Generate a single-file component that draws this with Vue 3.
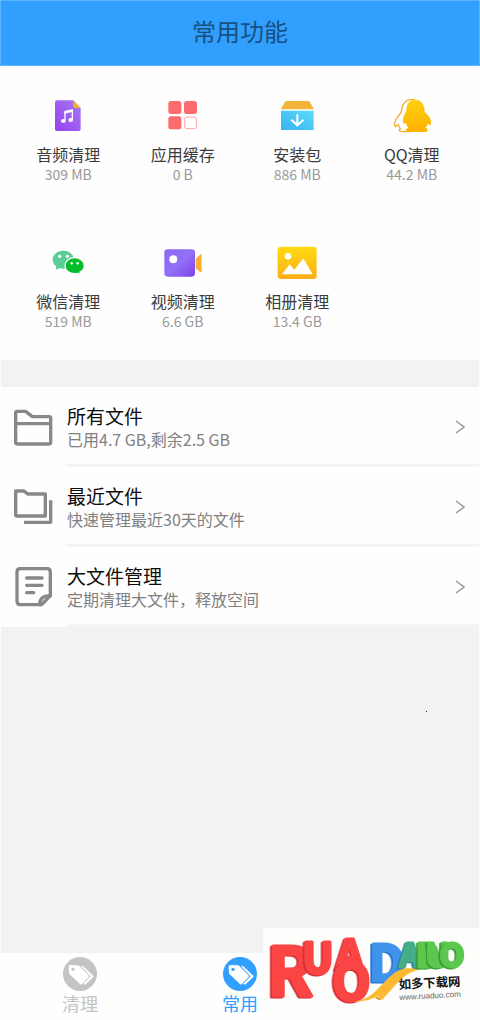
<template>
  <div class="page">
    <header class="top">
      <h1>常用功能</h1>
    </header>

    <main>
      <section class="tools">
        <button v-for="tool in tools" :key="tool.name" class="tool">
          <svg v-if="tool.icon === 'music'" viewBox="0 0 120 102">
            <defs>
              <linearGradient id="music" x1="1" y1="0" x2="0" y2="1">
                <stop offset="0" stop-color="#a77bf7" />
                <stop offset="1" stop-color="#9540ee" />
              </linearGradient>
            </defs>
            <path d="M27 4H76L98 27V90Q98 96 92 96H27Q21 96 21 90V10Q21 4 27 4Z" fill="url(#music)" />
            <path d="M76 4L98 27H80Q76 27 76 22Z" fill="#f5ae35" />
            <path d="M51 66V38M73 33V63" fill="none" stroke="#fff" stroke-width="4" />
            <path d="M49 36L75 30V38L49 44Z" fill="#fff" />
            <ellipse cx="46" cy="66" rx="7" ry="6" fill="#fff" />
            <ellipse cx="68" cy="63" rx="7" ry="6" fill="#fff" />
          </svg>
          <svg v-else-if="tool.icon === 'apps'" viewBox="0 0 120 102">
            <rect x="16" y="6" width="39" height="39" rx="8" fill="#fc6c6d" />
            <rect x="63" y="6" width="39" height="39" rx="8" fill="#fc6c6d" />
            <rect x="16" y="52" width="39" height="39" rx="8" fill="#fc6c6d" />
            <rect x="65" y="54" width="35" height="35" rx="7" fill="#fff" stroke="#f9a5a8" stroke-width="3" />
          </svg>
          <svg v-else-if="tool.icon === 'package'" viewBox="0 0 120 102">
            <defs>
              <linearGradient id="package" x1="1" y1="0" x2="0" y2="1">
                <stop offset="0" stop-color="#5edcf8" />
                <stop offset="1" stop-color="#37b1f3" />
              </linearGradient>
            </defs>
            <path d="M26 6H97L111 31H11Z" fill="#f3b43b" />
            <path d="M12 35H110V93H12Z" fill="url(#package)" />
            <path d="M61 46V78M43 62L61 79L79 62" fill="none" stroke="#fff" stroke-width="6" />
          </svg>
          <svg v-else-if="tool.icon === 'penguin'" viewBox="0 0 120 102">
            <defs>
              <linearGradient id="penguin" x1="0" y1="0" x2="0" y2="1">
                <stop offset="0" stop-color="#ffd010" />
                <stop offset="1" stop-color="#ffb300" />
              </linearGradient>
            </defs>
            <path
              d="M68 2C46-2 30 12 29 34C28 42 25 44 19 51C9 62 6 77 9 82C12 84 16 79 19 77C20 82 22 86 26 89C20 91 20 98 30 98H58"
              fill="#fff" stroke="#f6ab32" stroke-width="4" stroke-linejoin="round"
            />
            <path
              d="M69 2C51 2 42 17 43 36C36 47 31 61 34 73C37 75 40 73 42 72C43 79 46 83 50 87C40 88 38 98 49 99H100C111 97 109 89 100 87C104 83 107 79 108 73C112 79 117 82 117 73C118 60 110 49 98 39C98 16 88 2 69 2Z"
              fill="url(#penguin)"
            />
          </svg>
          <svg v-else-if="tool.icon === 'chat'" viewBox="0 0 120 102">
            <path d="M46 14C28 14 14 26 14 41C14 50 19 57 25 61L23 71L35 66Q40 68 46 68C64 68 78 56 78 41C78 26 64 14 46 14Z" fill="#59cd96" />
            <circle cx="35" cy="31" r="5" fill="#fff" />
            <circle cx="58" cy="31" r="5" fill="#fff" />
            <path d="M80 35C64 35 51 45 51 59C51 73 64 83 80 83Q85 83 89 82L98 87L96 78C104 74 109 67 109 59C109 45 96 35 80 35Z" fill="#04bd2c" stroke="#fff" stroke-width="4" />
            <circle cx="71" cy="52" r="4" fill="#d8f7de" />
            <circle cx="89" cy="52" r="4" fill="#d8f7de" />
          </svg>
          <svg v-else-if="tool.icon === 'video'" viewBox="0 0 120 102">
            <defs>
              <linearGradient id="video" x1="0" y1="0" x2="1" y2="1">
                <stop offset="0" stop-color="#8e66f2" />
                <stop offset="0.5" stop-color="#9270f7" />
                <stop offset="1" stop-color="#7b43e7" />
              </linearGradient>
            </defs>
            <rect x="4" y="10" width="92" height="82" rx="10" fill="url(#video)" />
            <path d="M98 39L112 25H116V79H112L98 67Z" fill="#f9b233" />
            <circle cx="31" cy="40" r="12" fill="#fff" />
          </svg>
          <svg v-else viewBox="0 0 120 102">
            <defs>
              <linearGradient id="album" x1="0" y1="0" x2="0" y2="1">
                <stop offset="0" stop-color="#ffdc12" />
                <stop offset="1" stop-color="#fcae16" />
              </linearGradient>
            </defs>
            <rect x="2" y="2" width="117" height="97" rx="9" fill="url(#album)" />
            <circle cx="33" cy="31" r="10" fill="#fff" />
            <path d="M15 85L38 55L52 71L79 37L107 85Z" fill="#fff" />
          </svg>
          <span class="name">{{ tool.name }}</span>
          <span class="size">{{ tool.size }}</span>
        </button>
      </section>

      <section class="files">
        <button v-for="file in files" :key="file.title" class="file">
          <svg class="file-icon" viewBox="0 0 120 120">
            <g v-if="file.icon === 'folder'">
              <path d="M8 106V17Q8 13 12 13H38L58 29H109Q113 29 113 33V106Q113 111 108 111H13Q8 111 8 106Z" />
              <path d="M8 50H113" />
            </g>
            <g v-else-if="file.icon === 'recent'">
              <path d="M8 83V12H33L44 21H97V87H12Q8 87 8 83Z" />
              <path d="M113 40V106H33" />
            </g>
            <g v-else>
              <path d="M22 5H102Q112 5 112 15V86L86 113H22Q12 113 12 103V15Q12 5 22 5Z" />
              <path d="M80 113Q79 86 112 86M41 33H87M41 55H87M41 77H62" stroke-linecap="round" />
            </g>
          </svg>
          <span class="file-body">
            <span class="file-text">
              <span class="file-title">{{ file.title }}</span>
              <span class="file-note">{{ file.note }}</span>
            </span>
            <svg class="arrow" viewBox="0 0 10 14">
              <path d="M1 1L9 7L1 13" />
            </svg>
          </span>
        </button>
      </section>

      <div class="rest"><i class="speck"></i></div>
    </main>

    <nav class="tabs">
      <button
        v-for="tab in tabs"
        :key="tab"
        class="tab"
        :class="{ active: tab === activeTab }"
        @click="activeTab = tab"
      >
        <svg viewBox="0 0 102 102">
          <circle cx="51" cy="51" r="51" fill="currentColor" />
          <path d="M53 26L61 28L91 56Q93 58 91 60L68 82Q65 84 61 80L83 58Z" fill="#fff" />
          <path d="M17 30Q17 24 23 24L43 25Q47 25 49 27L77 55Q79 58 77 60L57 81Q54 84 51 81L20 52Q18 50 18 47Z" fill="#fff" />
          <circle cx="30" cy="37" r="5" fill="currentColor" />
        </svg>
        <span>{{ tab }}</span>
      </button>
    </nav>

    <aside class="brand">
      <svg viewBox="0 0 651 276">
        <text
          v-for="(l, i) in letters"
          :key="i"
          class="letter"
          :class="l.tone"
          :x="l.x"
          :y="l.y"
          :font-size="l.size"
        >{{ l.char }}</text>
        <path d="M272 220C345 218 368 128 430 121Q452 119 468 127C430 130 408 160 358 215L342 205Q315 223 272 220Z" fill="#fdb932" />
        <path d="M340 206L356 214L348 216L336 209Z" fill="#d88b13" />
        <g transform="rotate(-3 408 186)">
          <text class="brand-name" x="408" y="183">如多下载网</text>
          <text class="brand-url" x="408" y="216">www.ruaduo.com</text>
        </g>
      </svg>
    </aside>
  </div>
</template>

<script setup>
import { ref } from "vue";

const tools = [
  { name: "音频清理", size: "309 MB", icon: "music" },
  { name: "应用缓存", size: "0 B", icon: "apps" },
  { name: "安装包", size: "886 MB", icon: "package" },
  { name: "QQ清理", size: "44.2 MB", icon: "penguin" },
  { name: "微信清理", size: "519 MB", icon: "chat" },
  { name: "视频清理", size: "6.6 GB", icon: "video" },
  { name: "相册清理", size: "13.4 GB", icon: "album" },
];

const files = [
  { title: "所有文件", note: "已用4.7 GB,剩余2.5 GB", icon: "folder" },
  { title: "最近文件", note: "快速管理最近30天的文件", icon: "recent" },
  { title: "大文件管理", note: "定期清理大文件，释放空间", icon: "large" },
];

const tabs = ["清理", "常用"];
const activeTab = ref("常用");

const letters = [
  { char: "R", x: 12, y: 204, size: 204, tone: "red" },
  { char: "U", x: 118, y: 134, size: 126, tone: "red" },
  { char: "A", x: 220, y: 126, size: 126, tone: "red" },
  { char: "D", x: 318, y: 158, size: 150, tone: "blue" },
  { char: "O", x: 208, y: 216, size: 150, tone: "red" },
  { char: "A", x: 410, y: 118, size: 96, tone: "teal" },
  { char: "D", x: 460, y: 118, size: 96, tone: "green" },
  { char: "U", x: 488, y: 118, size: 96, tone: "green" },
  { char: "O", x: 530, y: 118, size: 96, tone: "green" },
];
</script>

<style>
body {
  margin: 0;
  background: #fff;
}
</style>

<style scoped>
.page {
  position: relative;
  display: flex;
  flex-direction: column;
  min-height: 100vh;
  font-family: "Noto Sans CJK SC", sans-serif;
  background: #fefefe;
}
button {
  padding: 0;
  border: 0;
  background: none;
  font: inherit;
  color: inherit;
  cursor: pointer;
}
.top {
  box-sizing: border-box;
  height: 66px;
  border: 1px solid #5ab5ff;
  background: #309ffd;
}
h1 {
  margin: 0;
  font-size: 24px;
  font-weight: 400;
  line-height: 60px;
  text-align: center;
  color: #18507f;
}
main {
  display: flex;
  flex: 1;
  flex-direction: column;
  margin: 0 1px;
  background: #f1f3f3;
}
.tools {
  display: grid;
  grid-template-columns: repeat(4, 1fr);
  row-gap: 64px;
  padding: 33px 10px 31px;
  background: #fefefe;
}
.tool {
  display: flex;
  flex-direction: column;
  align-items: center;
}
.tool svg {
  width: 40px;
  height: 34px;
  margin-bottom: 9px;
}
.name {
  font-size: 16px;
  line-height: 24px;
  color: #3c3c3c;
}
.size {
  font-size: 14px;
  line-height: 16px;
  color: #999;
}
.files {
  margin-top: 27px;
  background: #fefefe;
}
.file {
  display: flex;
  align-items: center;
  gap: 14px;
  width: 100%;
  padding-left: 12px;
  text-align: left;
}
.file-icon {
  flex: none;
  width: 40px;
  height: 40px;
  fill: none;
  stroke: #888;
  stroke-width: 10;
  stroke-linejoin: round;
}
.file-body {
  display: flex;
  flex: 1;
  align-items: center;
  justify-content: space-between;
  padding: 17px 14px 14px 0;
  border-bottom: 3px solid #f3f4f4;
}
.file-text {
  display: flex;
  flex-direction: column;
}
.file-title {
  font-size: 19px;
  line-height: 24px;
  color: #0c0c0c;
}
.file-note {
  font-size: 16px;
  line-height: 22px;
  color: #808080;
}
.arrow {
  width: 10px;
  height: 14px;
  fill: none;
  stroke: #999;
  stroke-width: 1.5;
}
.rest {
  position: relative;
  flex: 1;
}
.speck {
  position: absolute;
  top: 84px;
  right: 52px;
  width: 1px;
  height: 1px;
  background: #333;
}
.tabs {
  display: grid;
  grid-template-columns: repeat(3, 1fr);
  height: 67px;
}
.tab {
  display: flex;
  flex-direction: column;
  align-items: center;
  padding-top: 4px;
  color: #c4c4c4;
}
.tab.active {
  color: #309ffd;
}
.tab svg {
  width: 34px;
  height: 34px;
}
.tab span {
  font-size: 18px;
  line-height: 24px;
}
.brand {
  position: absolute;
  right: 0;
  bottom: 0;
  background: #fdfdfb;
}
.brand svg {
  display: block;
  width: 217px;
  height: 92px;
  overflow: visible;
}
.letter {
  font-weight: 700;
  stroke-width: 9;
  stroke-linejoin: round;
}
.red {
  fill: #fb4545;
  stroke: #fb4545;
  filter: drop-shadow(-5px 3px 0 #d42c33);
}
.blue {
  fill: #3f93ea;
  stroke: #3f93ea;
  filter: drop-shadow(-5px 3px 0 #236fc8);
}
.teal {
  fill: #46ae86;
  stroke: #46ae86;
  filter: drop-shadow(-5px 3px 0 #2880ad);
}
.green {
  fill: #5cc74e;
  stroke: #5cc74e;
  filter: drop-shadow(-5px 3px 0 #359a32);
}
.brand-name {
  font-size: 37px;
  font-weight: 700;
  fill: #111;
}
.brand-url {
  font-family: "Liberation Sans", sans-serif;
  font-size: 24px;
  fill: #666;
}
</style>
